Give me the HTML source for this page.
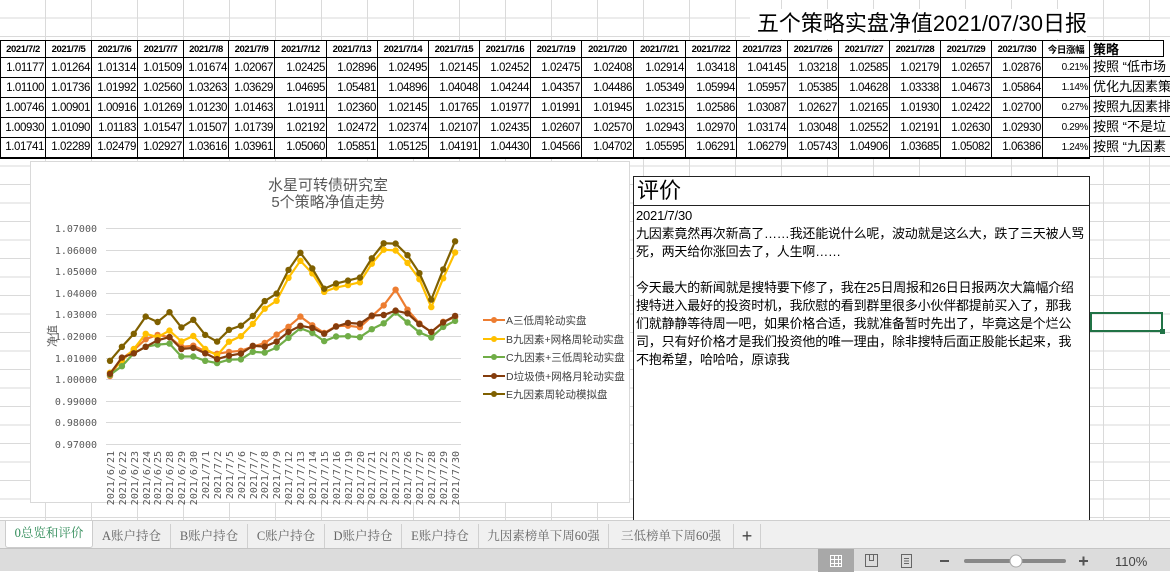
<!DOCTYPE html>
<html><head><meta charset="utf-8">
<style>
*{margin:0;padding:0;box-sizing:border-box}
body{width:1170px;height:571px;overflow:hidden;position:relative;background:#fff;font-family:"Liberation Sans","Noto Sans CJK SC",sans-serif;color:#000}
.grid{position:absolute;left:0;top:0;width:1170px;height:520px;
background-image:linear-gradient(to bottom,#dadada 1px,transparent 1px),linear-gradient(to right,#dadada 1px,transparent 1px);
background-size:1170px 18.5px,46px 520px;background-position:0 -1px,45px 0}
.ttl{position:absolute;left:750px;top:9px;width:337px;font-size:22px;text-align:right;white-space:nowrap;background:#fff;height:30px;line-height:30px}
table{position:absolute;left:0;top:40px;border-collapse:collapse;background:#fff}
td{border:1px solid #000;height:20px;font-size:11.5px;text-align:right;padding:0 1px 0 0;white-space:nowrap;overflow:hidden;letter-spacing:-0.4px}
tr.h td{height:17px;font-size:9.5px;font-weight:bold;text-align:center;padding:0}
tr:last-child td{border-bottom:2px solid #000}
.strat{position:absolute;left:1089px;top:40px;width:81px;background:#fff;border-left:1px solid #000}
.strat div{height:20px;font-size:13px;line-height:20px;white-space:nowrap;overflow:hidden;border-bottom:1px solid #000;padding-left:3px}
.strat div:first-child{height:17px;line-height:17px;font-weight:bold;border:1px solid #000;border-left:0;width:74px}
.chart{position:absolute;left:30px;top:161px;width:600px;height:342px;background:#fff;border:1px solid #d9d9d9}
.eval{position:absolute;left:633px;top:176px;width:457px;height:345px;border:1px solid #222;background:#fff}
.eval .hd{height:29px;border-bottom:1px solid #222;font-size:22px;line-height:28px;padding-left:3px}
.eval .bd{font-size:13px;line-height:18px;padding:1px 0 0 2px;white-space:nowrap;letter-spacing:-0.2px}
.sel{position:absolute;left:1090px;top:312px;width:73px;height:20px;border:2px solid #217346}
.sel:after{content:"";position:absolute;right:-4px;bottom:-4px;width:5px;height:5px;background:#217346}
.tabs{position:absolute;left:0;top:520px;width:1170px;height:28px;background:#f0f0f0;border-top:1px solid #cfcfcf}
.tab{position:absolute;top:3px;height:24px;font-family:"Liberation Serif","Noto Serif CJK SC",serif;font-size:12.5px;color:#666;line-height:24px;border-right:1px solid #d0d0d0;text-align:center}
.status{position:absolute;left:0;top:548px;width:1170px;height:23px;background:#dcdcdc;border-top:1px solid #c4c4c4}
</style></head><body>
<div class="grid"></div>
<div class="ttl">五个策略实盘净值2021/07/30日报</div>
<table id="t">
<colgroup>
<col style="width:45px"><col style="width:46px"><col style="width:46px"><col style="width:46px"><col style="width:45px"><col style="width:46px"><col style="width:52px"><col style="width:51px"><col style="width:51px"><col style="width:51px"><col style="width:51px"><col style="width:51px"><col style="width:52px"><col style="width:52px"><col style="width:51px"><col style="width:51px"><col style="width:51px"><col style="width:51px"><col style="width:51px"><col style="width:51px"><col style="width:51px"><col style="width:47px">
</colgroup>
<tr class="h"><td>2021/7/2</td><td>2021/7/5</td><td>2021/7/6</td><td>2021/7/7</td><td>2021/7/8</td><td>2021/7/9</td><td>2021/7/12</td><td>2021/7/13</td><td>2021/7/14</td><td>2021/7/15</td><td>2021/7/16</td><td>2021/7/19</td><td>2021/7/20</td><td>2021/7/21</td><td>2021/7/22</td><td>2021/7/23</td><td>2021/7/26</td><td>2021/7/27</td><td>2021/7/28</td><td>2021/7/29</td><td>2021/7/30</td><td>今日涨幅</td></tr>
<tr><td>1.01177</td><td>1.01264</td><td>1.01314</td><td>1.01509</td><td>1.01674</td><td>1.02067</td><td>1.02425</td><td>1.02896</td><td>1.02495</td><td>1.02145</td><td>1.02452</td><td>1.02475</td><td>1.02408</td><td>1.02914</td><td>1.03418</td><td>1.04145</td><td>1.03218</td><td>1.02585</td><td>1.02179</td><td>1.02657</td><td>1.02876</td><td style="font-size:10px">0.21%</td></tr>
<tr><td>1.01100</td><td>1.01736</td><td>1.01992</td><td>1.02560</td><td>1.03263</td><td>1.03629</td><td>1.04695</td><td>1.05481</td><td>1.04896</td><td>1.04048</td><td>1.04244</td><td>1.04357</td><td>1.04486</td><td>1.05349</td><td>1.05994</td><td>1.05957</td><td>1.05385</td><td>1.04628</td><td>1.03338</td><td>1.04673</td><td>1.05864</td><td style="font-size:10px">1.14%</td></tr>
<tr><td>1.00746</td><td>1.00901</td><td>1.00916</td><td>1.01269</td><td>1.01230</td><td>1.01463</td><td>1.01911</td><td>1.02360</td><td>1.02145</td><td>1.01765</td><td>1.01977</td><td>1.01991</td><td>1.01945</td><td>1.02315</td><td>1.02586</td><td>1.03087</td><td>1.02627</td><td>1.02165</td><td>1.01930</td><td>1.02422</td><td>1.02700</td><td style="font-size:10px">0.27%</td></tr>
<tr><td>1.00930</td><td>1.01090</td><td>1.01183</td><td>1.01547</td><td>1.01507</td><td>1.01739</td><td>1.02192</td><td>1.02472</td><td>1.02374</td><td>1.02107</td><td>1.02435</td><td>1.02607</td><td>1.02570</td><td>1.02943</td><td>1.02970</td><td>1.03174</td><td>1.03048</td><td>1.02552</td><td>1.02191</td><td>1.02630</td><td>1.02930</td><td style="font-size:10px">0.29%</td></tr>
<tr><td>1.01741</td><td>1.02289</td><td>1.02479</td><td>1.02927</td><td>1.03616</td><td>1.03961</td><td>1.05060</td><td>1.05851</td><td>1.05125</td><td>1.04191</td><td>1.04430</td><td>1.04566</td><td>1.04702</td><td>1.05595</td><td>1.06291</td><td>1.06279</td><td>1.05743</td><td>1.04906</td><td>1.03685</td><td>1.05082</td><td>1.06386</td><td style="font-size:10px">1.24%</td></tr>
</table>
<div class="strat"><div>策略</div><div>按照 “低市场</div><div>优化九因素策</div><div>按照九因素排</div><div>按照 “不是垃</div><div>按照 “九因素</div></div>

<div class="chart"></div>
<svg style="position:absolute;left:0;top:0" width="1170" height="520" id="sv" font-family="Liberation Sans,Noto Sans CJK SC,sans-serif">
<text x="328" y="190" font-size="15" fill="#595959" text-anchor="middle">水星可转债研究室</text>
<text x="328" y="207" font-size="15" fill="#595959" text-anchor="middle">5个策略净值走势</text>
<g stroke="#d9d9d9" stroke-width="1">
<line x1="106" x2="461" y1="228.5" y2="228.5"/><line x1="106" x2="461" y1="250.5" y2="250.5"/><line x1="106" x2="461" y1="271.5" y2="271.5"/><line x1="106" x2="461" y1="293.5" y2="293.5"/><line x1="106" x2="461" y1="314.5" y2="314.5"/><line x1="106" x2="461" y1="336.5" y2="336.5"/><line x1="106" x2="461" y1="358.5" y2="358.5"/><line x1="106" x2="461" y1="379.5" y2="379.5"/><line x1="106" x2="461" y1="401.5" y2="401.5"/><line x1="106" x2="461" y1="422.5" y2="422.5"/><line x1="106" x2="461" y1="444.5" y2="444.5"/>
</g>
<g font-size="10" fill="#595959" text-anchor="end" font-family="DejaVu Sans Mono,monospace">
<text x="97" y="232">1.07000</text><text x="97" y="254">1.06000</text><text x="97" y="275">1.05000</text><text x="97" y="297">1.04000</text><text x="97" y="318">1.03000</text><text x="97" y="340">1.02000</text><text x="97" y="362">1.01000</text><text x="97" y="383">1.00000</text><text x="97" y="405">0.99000</text><text x="97" y="426">0.98000</text><text x="97" y="448">0.97000</text>
</g>
<text x="0" y="0" font-size="11" fill="#595959" transform="translate(56,347) rotate(-90)">净值</text>
<g id="xl" font-size="10" fill="#595959" text-anchor="end" font-family="DejaVu Sans Mono,monospace">
<text transform="translate(114,451) rotate(-90)">2021/6/21</text><text transform="translate(126,451) rotate(-90)">2021/6/22</text><text transform="translate(138,451) rotate(-90)">2021/6/23</text><text transform="translate(150,451) rotate(-90)">2021/6/24</text><text transform="translate(161,451) rotate(-90)">2021/6/25</text><text transform="translate(173,451) rotate(-90)">2021/6/28</text><text transform="translate(185,451) rotate(-90)">2021/6/29</text><text transform="translate(197,451) rotate(-90)">2021/6/30</text><text transform="translate(209,451) rotate(-90)">2021/7/1</text><text transform="translate(221,451) rotate(-90)">2021/7/2</text><text transform="translate(233,451) rotate(-90)">2021/7/5</text><text transform="translate(245,451) rotate(-90)">2021/7/6</text><text transform="translate(257,451) rotate(-90)">2021/7/7</text><text transform="translate(268,451) rotate(-90)">2021/7/8</text><text transform="translate(280,451) rotate(-90)">2021/7/9</text><text transform="translate(292,451) rotate(-90)">2021/7/12</text><text transform="translate(304,451) rotate(-90)">2021/7/13</text><text transform="translate(316,451) rotate(-90)">2021/7/14</text><text transform="translate(328,451) rotate(-90)">2021/7/15</text><text transform="translate(340,451) rotate(-90)">2021/7/16</text><text transform="translate(352,451) rotate(-90)">2021/7/19</text><text transform="translate(364,451) rotate(-90)">2021/7/20</text><text transform="translate(375,451) rotate(-90)">2021/7/21</text><text transform="translate(387,451) rotate(-90)">2021/7/22</text><text transform="translate(399,451) rotate(-90)">2021/7/23</text><text transform="translate(411,451) rotate(-90)">2021/7/26</text><text transform="translate(423,451) rotate(-90)">2021/7/27</text><text transform="translate(435,451) rotate(-90)">2021/7/28</text><text transform="translate(447,451) rotate(-90)">2021/7/29</text><text transform="translate(459,451) rotate(-90)">2021/7/30</text>
</g>
<g id="lines"></g>
<g font-size="10.5" fill="#404040">
<line x1="483" x2="505" y1="320" y2="320" stroke="#ED7D31" stroke-width="2"/><circle cx="494" cy="320" r="3" fill="#ED7D31"/><text x="506" y="324">A三低周轮动实盘</text>
<line x1="483" x2="505" y1="339" y2="339" stroke="#FFC000" stroke-width="2"/><circle cx="494" cy="339" r="3" fill="#FFC000"/><text x="506" y="343">B九因素+网格周轮动实盘</text>
<line x1="483" x2="505" y1="357" y2="357" stroke="#70AD47" stroke-width="2"/><circle cx="494" cy="357" r="3" fill="#70AD47"/><text x="506" y="361">C九因素+三低周轮动实盘</text>
<line x1="483" x2="505" y1="376" y2="376" stroke="#843C0C" stroke-width="2"/><circle cx="494" cy="376" r="3" fill="#843C0C"/><text x="506" y="380">D垃圾债+网格月轮动实盘</text>
<line x1="483" x2="505" y1="394" y2="394" stroke="#7F6000" stroke-width="2"/><circle cx="494" cy="394" r="3" fill="#7F6000"/><text x="506" y="398">E九因素周轮动模拟盘</text>
</g>
</svg>

<div class="eval"><div class="hd">评价</div><div class="bd">2021/7/30<br>九因素竟然再次新高了……我还能说什么呢，波动就是这么大，跌了三天被人骂<br>死，两天给你涨回去了，人生啊……<br><br>今天最大的新闻就是搜特要下修了，我在25日周报和26日日报两次大篇幅介绍<br>搜特进入最好的投资时机，我欣慰的看到群里很多小伙伴都提前买入了，那我<br>们就静静等待周一吧，如果价格合适，我就准备暂时先出了，毕竟这是个烂公<br>司，只有好价格才是我们投资他的唯一理由，除非搜特后面正股能长起来，我<br>不抱希望，哈哈哈，原谅我</div></div>
<div class="sel"></div>

<div class="tabs">
<div class="tab" style="left:5px;width:88px;background:#fff;color:#2e8b57;border:1px solid #ccc;border-top:0;top:0;height:27px;border-radius:0 0 3px 3px">0总览和评价</div>
<div class="tab" style="left:93px;width:78px">A账户持仓</div>
<div class="tab" style="left:171px;width:77px">B账户持仓</div>
<div class="tab" style="left:248px;width:77px">C账户持仓</div>
<div class="tab" style="left:325px;width:77px">D账户持仓</div>
<div class="tab" style="left:402px;width:77px">E账户持仓</div>
<div class="tab" style="left:479px;width:130px">九因素榜单下周60强</div>
<div class="tab" style="left:609px;width:125px">三低榜单下周60强</div>
<div class="tab" style="left:734px;width:27px;font-size:18px;color:#444;font-family:'Liberation Sans',sans-serif">+</div>
</div>
<div class="status">
<div style="position:absolute;left:818px;top:0;width:36px;height:23px;background:#a8a8a8"></div>
<svg style="position:absolute;left:0;top:0" width="1170" height="23">
<g stroke="#fff" stroke-width="1" fill="none"><rect x="830.5" y="6.5" width="11" height="11"/><line x1="834.5" x2="834.5" y1="6" y2="18"/><line x1="838.5" x2="838.5" y1="6" y2="18"/><line x1="830" x2="842" y1="10.5" y2="10.5"/><line x1="830" x2="842" y1="14.5" y2="14.5"/></g>
<g stroke="#666" fill="none"><rect x="865.5" y="5.5" width="12" height="12"/><path d="M869.5 5.5v6h4v-6"/><rect x="901.5" y="5.5" width="10" height="13"/><path d="M904 9.5h5M904 12h5M904 14.5h5"/></g>
<line x1="940" x2="949" y1="12" y2="12" stroke="#555" stroke-width="2"/>
<line x1="966" x2="1064" y1="12" y2="12" stroke="#888" stroke-width="4" stroke-linecap="round"/>
<circle cx="1016" cy="12" r="6" fill="#fff" stroke="#aaa"/>
<path d="M1079 12h9M1083.5 7.5v9" stroke="#555" stroke-width="2"/>
<text x="1115" y="17" font-size="13" fill="#444" font-family="Liberation Sans,sans-serif">110%</text>
</svg>
</div>
<script>
var d={
A:["#ED7D31",[1.0015,1.0095,1.0135,1.0185,1.0205,1.0195,1.0150,1.0155,1.0130,1.01177,1.01264,1.01314,1.01509,1.01674,1.02067,1.02425,1.02896,1.02495,1.02145,1.02452,1.02475,1.02408,1.02914,1.03418,1.04145,1.03218,1.02585,1.02179,1.02657,1.02876]],
B:["#FFC000",[1.0030,1.0085,1.0140,1.0210,1.0195,1.0225,1.0175,1.0200,1.0140,1.01100,1.01736,1.01992,1.02560,1.03263,1.03629,1.04695,1.05481,1.04896,1.04048,1.04244,1.04357,1.04486,1.05349,1.05994,1.05957,1.05385,1.04628,1.03338,1.04673,1.05864]],
C:["#70AD47",[1.0020,1.0060,1.0120,1.0150,1.0160,1.0165,1.0105,1.0105,1.0085,1.00746,1.00901,1.00916,1.01269,1.01230,1.01463,1.01911,1.02360,1.02145,1.01765,1.01977,1.01991,1.01945,1.02315,1.02586,1.03087,1.02627,1.02165,1.01930,1.02422,1.02700]],
D:["#843C0C",[1.0025,1.0100,1.0120,1.0150,1.0180,1.0195,1.0140,1.0145,1.0120,1.00930,1.01090,1.01183,1.01547,1.01507,1.01739,1.02192,1.02472,1.02374,1.02107,1.02435,1.02607,1.02570,1.02943,1.02970,1.03174,1.03048,1.02552,1.02191,1.02630,1.02930]],
E:["#7F6000",[1.0085,1.0150,1.0210,1.0290,1.0265,1.0310,1.0240,1.0275,1.0205,1.01741,1.02289,1.02479,1.02927,1.03616,1.03961,1.05060,1.05851,1.05125,1.04191,1.04430,1.04566,1.04702,1.05595,1.06291,1.06279,1.05743,1.04906,1.03685,1.05082,1.06386]]};
var g=document.getElementById('lines'),h='';
for(var k in d){var c=d[k][0],v=d[k][1],p=[],cs='';
for(var i=0;i<v.length;i++){var x=110+i*11.9,y=228+(1.07-v[i])*2160;p.push(x.toFixed(1)+','+y.toFixed(1));cs+='<circle cx="'+x.toFixed(1)+'" cy="'+y.toFixed(1)+'" r="3.2" fill="'+c+'"/>';}
h+='<polyline points="'+p.join(' ')+'" fill="none" stroke="'+c+'" stroke-width="2.2"/>'+cs;}
g.innerHTML=h;
</script>
</body></html>
